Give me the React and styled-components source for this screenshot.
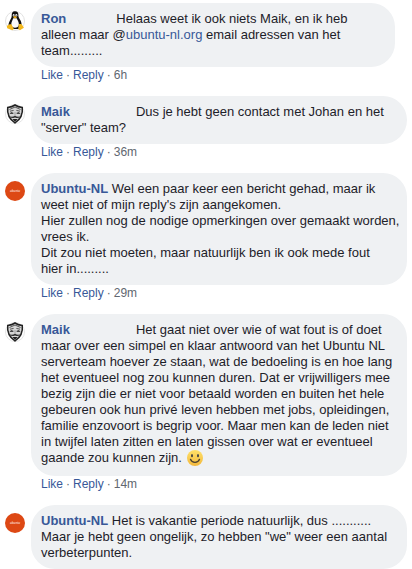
import React from "react";
import styled, { createGlobalStyle } from "styled-components";

const GlobalStyle = createGlobalStyle`
  * { box-sizing: border-box; }
  body {
    margin: 0;
    background: #fff;
    color: #1d2129;
    font-family: "Liberation Sans", Arial, sans-serif;
    font-size: 13px;
    line-height: 16px;
  }
`;

const Thread = styled.main`
  display: flex;
  flex-direction: column;
  gap: 12px;
  padding: 3px 5px 0;
`;

const Comment = styled.article`
  display: flex;
  align-items: flex-start;
  gap: 6px;
`;

const Avatar = styled.svg`
  flex: none;
  width: 20px;
  height: 20px;
  margin-top: 8px;
`;

const Body = styled.div`
  flex: 1;
  min-width: 0;
`;

const Bubble = styled.div`
  margin-right: ${(p) => (p.$inset ? "12px" : "0")};
  padding: 8px 6px 8px 10px;
  border-radius: 24px;
  background: #eff1f3;
  white-space: pre-line;
`;

const Author = styled.a`
  color: #385898;
  font-weight: 700;
  text-decoration: none;
`;

const HiddenName = styled.span`
  display: inline-block;
  width: ${(p) => p.$width}px;
`;

const TextLink = styled.a`
  color: #385898;
  text-decoration: none;
`;

const Actions = styled.footer`
  display: flex;
  align-items: flex-start;
  gap: 3px;
  height: 17px;
  padding-left: 10px;
  color: #616770;
  font-size: 12px;
`;

const Action = styled.button`
  padding: 0;
  border: 0;
  background: none;
  color: #385898;
  font: inherit;
  cursor: pointer;
`;

const Smile = styled.svg`
  width: 16px;
  height: 16px;
  margin: 0 1px 2px;
  vertical-align: -6px;
`;

const BrandText = styled.text`
  font: italic 700 3px "Liberation Sans", Arial, sans-serif;
  fill: #f9d3c4;
`;

function Penguin() {
  return (
    <Avatar viewBox="0 0 20 20" role="img" aria-label="Ron">
      <circle cx="10" cy="10" r="9.5" fill="#fff" stroke="#e2e2e2" />
      <path d="M10 .3C7.400.3 6.600 2 6.700 4.300c.1 2-.5 2.800-1.500 4.700-1.300 2.300-2 4.500-1.500 6.500L7 18h7l2.600-3c.3-2.500-.6-5-2-7C13.500 6.200 13.400 5.400 13.400 3.700 13.400 1.600 12.400.3 10 .3Z" fill="#111" />
      <path d="M8.300 7.200c-.8 2.100-2.200 4.200-2 6.600.2 1.800 1.700 3 3.700 3s3.700-1.100 3.900-3c.3-2.400-1.500-4.700-2.200-6.600Z" fill="#fafafa" />
      <ellipse cx="8.700" cy="4.300" rx=".9" ry="1.200" fill="#eee" />
      <ellipse cx="11.300" cy="4.300" rx="1" ry="1.200" fill="#eee" />
      <circle cx="9" cy="4.500" r=".4" />
      <circle cx="11.100" cy="4.500" r=".4" />
      <path d="m7.900 5.900 2-1 2.300 1-2.200 1.500Z" fill="#efad18" />
      <path d="m4.600 13.200-2.800 1.900.4 2.200 5.200 2 1.400-1.600-2.500-4.500ZM13.800 13.100l-.6 5 1.700 1.100 4-2.500-.8-1.500-1.800-2.300Z" fill="#f3b81d" />
    </Avatar>
  );
}

function Mask() {
  return (
    <Avatar viewBox="0 0 20 20" role="img" aria-label="Maik">
      <circle cx="10" cy="10" r="9.500" fill="#fff" stroke="#e5e5e5" />
      <path d="M10 1c2 1.300 4.500 2.100 7.300 2.500.7 6.300-1.500 11.600-7.300 15.500C4.200 15.100 2 9.800 2.700 3.500 5.500 3.100 8 2.300 10 1Z" fill="#d6d6d6" stroke="#222" strokeWidth="1.500" />
      <path d="M4.500 5.500 10 3l5.500 2.500M5 7.200l3.600-.8M15 7.200l-3.600-.8" fill="none" stroke="#555" strokeWidth="1" />
      <path d="m4.500 9.400 1.800-1.500 2.500 1-.9 1.100H5.600ZM15.500 9.400l-1.800-1.500-2.500 1 .9 1.100h2.300Z" fill="#444" />
      <path d="M10 8.200v2.600" stroke="#888" strokeWidth=".8" />
      <path d="M5 12.200c1.800.9 3.400.3 5-.8 1.600 1.100 3.200 1.700 5 .8-1 2.200-3.200 2.200-5 1.300-1.800.9-4 .9-5-1.300Z" fill="#333" />
      <path d="M7.500 15h5L10 18Z" fill="#222" />
    </Avatar>
  );
}

function Ubuntu() {
  return (
    <Avatar viewBox="0 0 20 20" role="img" aria-label="Ubuntu-NL">
      <circle cx="10" cy="10" r="10" fill="#dd4814" />
      <BrandText x="10" y="11" textAnchor="middle">ubuntu</BrandText>
    </Avatar>
  );
}

function SmileIcon() {
  return (
    <Smile viewBox="0 0 16 16" role="img" aria-label="smile">
      <defs>
        <linearGradient id="face" x1="0" y1="0" x2="0" y2="1">
          <stop stopColor="#ffe169" />
          <stop offset="1" stopColor="#f2b83c" />
        </linearGradient>
      </defs>
      <circle cx="8" cy="8" r="8" fill="url(#face)" />
      <ellipse cx="5" cy="5.700" rx="1" ry="1.600" fill="#454545" />
      <ellipse cx="11" cy="5.700" rx="1" ry="1.600" fill="#454545" />
      <path d="M3.500 9.300c1.500 4 7.500 4 9 0" fill="none" stroke="#4b4030" strokeWidth="1.300" strokeLinecap="round" />
    </Smile>
  );
}

const avatars = { Ron: Penguin, Maik: Mask, "Ubuntu-NL": Ubuntu };

const comments = [
  {
    author: "Ron",
    hidden: 50,
    inset: true,
    time: "6h",
    content: (
      <>
        {"Helaas weet ik ook niets Maik, en ik heb\nalleen maar @"}
        <TextLink href="#ubuntu-nl">ubuntu-nl.org</TextLink>
        {" email adressen van het\nteam........."}
      </>
    ),
  },
  {
    author: "Maik",
    hidden: 66,
    time: "36m",
    content: 'Dus je hebt geen contact met Johan en het "server" team?',
  },
  {
    author: "Ubuntu-NL",
    time: "29m",
    content:
      "Wel een paar keer een bericht gehad, maar ik weet niet of mijn reply's zijn aangekomen.\nHier zullen nog de nodige opmerkingen over gemaakt worden, vrees ik.\nDit zou niet moeten, maar natuurlijk ben ik ook mede fout\nhier in.........",
  },
  {
    author: "Maik",
    hidden: 66,
    time: "14m",
    content: (
      <>
        Het gaat niet over wie of wat fout is of doet maar over een simpel en klaar antwoord van het
        {" "}Ubuntu NL serverteam hoever ze staan, wat de bedoeling is en hoe lang het eventueel nog zou
        {" "}kunnen duren. Dat er vrijwilligers mee bezig zijn die er niet voor betaald worden en buiten
        {" "}het hele gebeuren ook hun privé leven hebben met jobs, opleidingen, familie enzovoort is
        {" "}begrip voor. Maar men kan de leden niet{"\n"}in twijfel laten zitten en laten gissen over wat er
        {" "}eventueel gaande zou kunnen zijn. <SmileIcon />
      </>
    ),
  },
  {
    author: "Ubuntu-NL",
    content:
      'Het is vakantie periode natuurlijk, dus ...........\nMaar je hebt geen ongelijk, zo hebben "we" weer een aantal verbeterpunten.',
  },
];

export default function App() {
  return (
    <>
      <GlobalStyle />
      <Thread>
        {comments.map(({ author, hidden, inset, time, content }, index) => {
          const Picture = avatars[author];
          return (
            <Comment key={index}>
              <Picture />
              <Body>
                <Bubble $inset={inset}>
                  <Author href="#profile">{author}</Author>
                  {hidden ? <HiddenName $width={hidden} /> : " "}
                  {content}
                </Bubble>
                {time && (
                  <Actions>
                    <Action type="button">Like</Action>
                    <span>·</span>
                    <Action type="button">Reply</Action>
                    <span>·</span>
                    <time>{time}</time>
                  </Actions>
                )}
              </Body>
            </Comment>
          );
        })}
      </Thread>
    </>
  );
}
